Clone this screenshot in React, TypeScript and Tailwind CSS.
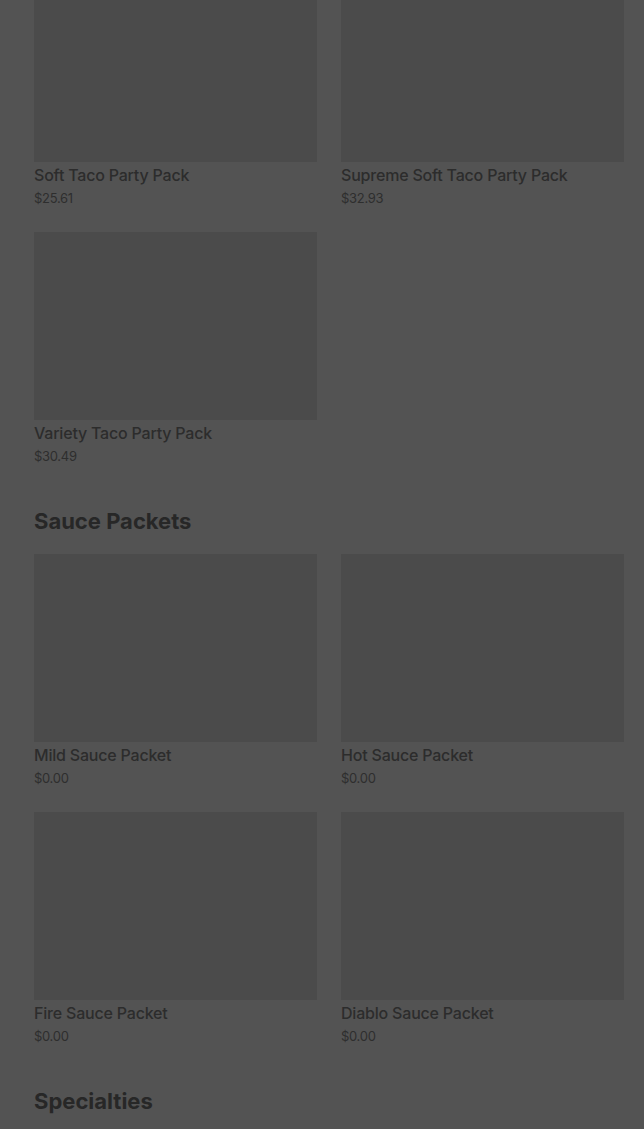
const sections = [
  {
    title: null as string | null,
    items: [
      { name: "Soft Taco Party Pack", price: "$25.61" },
      { name: "Supreme Soft Taco Party Pack", price: "$32.93" },
      { name: "Variety Taco Party Pack", price: "$30.49" },
    ],
  },
  {
    title: "Sauce Packets",
    items: [
      { name: "Mild Sauce Packet", price: "$0.00" },
      { name: "Hot Sauce Packet", price: "$0.00" },
      { name: "Fire Sauce Packet", price: "$0.00" },
      { name: "Diablo Sauce Packet", price: "$0.00" },
    ],
  },
  {
    title: "Specialties",
    items: [] as { name: string; price: string }[],
  },
];

const ItemCard = ({ name, price }: { name: string; price: string }) => (
  <div className="flex flex-col">
    <div className="h-[188px] w-full bg-[#4b4b4b]" />
    <div className="mt-[3px] text-[16px] leading-[20px] font-medium text-[#2c2c2c] tracking-[-0.2px]">
      {name}
    </div>
    <div className="mt-1 text-[13px] leading-[18px] text-[#2e2e2e] tracking-[-0.3px]">
      {price}
    </div>
  </div>
);

export default function App() {
  return (
    <div
      className="h-[1129px] w-full overflow-hidden bg-[#535353] pl-[34px] pr-[20px]"
      style={{ fontFamily: "Inter, 'Noto Sans', sans-serif" }}
    >
      <div className="-mt-[26px] flex flex-col gap-[42px]">
        {sections.map((section, i) => (
          <div key={i} className="flex flex-col">
            {section.title && (
              <h2 className="mb-[19px] text-[22px] leading-[28px] font-bold tracking-[0px] text-[#272727]">
                {section.title}
              </h2>
            )}
            {section.items.length > 0 && (
              <div className="grid grid-cols-2 gap-x-[24px] gap-y-[25px]">
                {section.items.map((item) => (
                  <ItemCard key={item.name} name={item.name} price={item.price} />
                ))}
              </div>
            )}
          </div>
        ))}
      </div>
    </div>
  );
}
